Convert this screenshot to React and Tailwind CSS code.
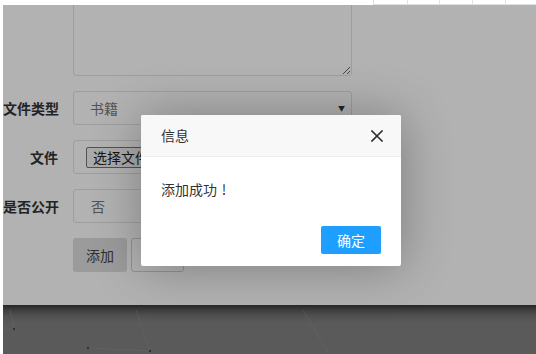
import React from "react";

const font = { fontFamily: '"Noto Sans CJK SC", "Noto Sans", sans-serif' };

function Label({ children }) {
  return (
    <div className="w-[55px] shrink-0 whitespace-nowrap text-right text-[14px] font-bold leading-[34px] text-[#333]">
      {children}
    </div>
  );
}

export default function App() {
  return (
    <div className="relative flex h-[354px] w-[536px] flex-col overflow-hidden bg-white" style={font}>
      {/* top strip with table cells */}
      <div className="flex h-[5px] shrink-0">
        <div className="w-[373px] shrink-0" />
        <div className="h-[5px] w-[34px] shrink-0 border-b border-l border-[#dfe3e3]" />
        <div className="h-[5px] w-[32px] shrink-0 border-b border-l border-[#dfe3e3]" />
        <div className="h-[5px] w-[33px] shrink-0 border-b border-l border-[#dfe3e3]" />
        <div className="h-[5px] w-[33px] shrink-0 border-b border-l border-[#dfe3e3]" />
        <div className="h-[5px] w-[33px] shrink-0 border-b border-l border-[#dfe3e3]" />
      </div>

      <div className="flex min-h-0 flex-1">
        <div className="w-[3px] shrink-0 bg-white" />
        <div className="flex min-w-0 flex-1 flex-col">
          {/* framed page with overlay */}
          <div className="relative h-[300px] shrink-0 overflow-hidden bg-white">
            <div className="mt-[-30px] flex flex-col gap-[15px]">
              <div className="flex">
                <div className="w-[55px] shrink-0" />
                <textarea
                  className="ml-[15px] h-[101px] w-[279px] rounded-[3px] border border-[#e2e2e2] bg-white"
                  defaultValue=""
                />
              </div>
              <div className="flex">
                <Label>文件类型</Label>
                <div className="ml-[15px] flex h-[34px] w-[279px] items-center justify-between rounded-[3px] border border-[#e2e2e2] bg-white pl-[16px] pr-[6px]">
                  <span className="text-[14px] text-[#777]">书籍</span>
                  <span className="text-[7px] leading-none text-[#333]">▼</span>
                </div>
              </div>
              <div className="flex">
                <Label>文件</Label>
                <div className="ml-[15px] flex h-[34px] w-[279px] items-center rounded-[3px] border border-[#e2e2e2] bg-white pl-[12px]">
                  <div className="flex h-[21px] items-center rounded-[2px] border border-[#767676] bg-[#f4f4f4] px-[6px] text-[14px] leading-none text-[#222]">
                    选择文件
                  </div>
                  <span className="ml-[6px] text-[14px] text-[#333]">未选择任何文件</span>
                </div>
              </div>
              <div className="flex">
                <Label>是否公开</Label>
                <div className="ml-[15px] flex h-[34px] w-[279px] items-center rounded-[3px] border border-[#e2e2e2] bg-white pl-[17px]">
                  <span className="text-[14px] text-[#777]">否</span>
                </div>
              </div>
              <div className="flex">
                <div className="w-[55px] shrink-0" />
                <div className="ml-[15px] flex gap-[4px]">
                  <div className="flex h-[34px] w-[54px] items-center justify-center rounded-[3px] bg-[#dedede] text-[14px] text-[#444]">
                    添加
                  </div>
                  <div className="flex h-[34px] w-[53px] items-center justify-center rounded-[3px] border border-[#d2d2d2] bg-white text-[14px] text-[#555]">
                    重置
                  </div>
                </div>
              </div>
            </div>
            <div className="absolute inset-0 bg-black/30" />
          </div>

          {/* dark area below */}
          <div className="relative flex-1 bg-[linear-gradient(to_bottom,#262626_0px,#3e3e3e_5px,#515151_11px,#5a5a5a_18px,#5a5a5a_100%)]">
            <svg className="absolute inset-0" width="533" height="49" viewBox="0 0 533 49">
              <g stroke="#6a6a6a" strokeWidth="0.6" fill="none" opacity="0.7">
                <polyline points="7,5 11,24 0,24" />
                <polyline points="85,43 147,46" />
                <line x1="133" y1="5" x2="147" y2="46" />
                <line x1="300" y1="5" x2="326" y2="49" />
              </g>
              <g fill="#303030">
                <rect x="10" y="23" width="2" height="2" />
                <rect x="84" y="42" width="2" height="2" />
                <rect x="146" y="45" width="2" height="2" />
              </g>
            </svg>
          </div>
        </div>
      </div>

      {/* dialog */}
      <div className="absolute left-[141px] top-[115px] w-[260px] rounded-[2px] bg-white shadow-[1px_1px_50px_rgba(0,0,0,0.3)]">
        <div className="flex h-[42px] items-center justify-between rounded-t-[2px] border-b border-[#eee] bg-[#f8f8f8] pl-[20px] pr-[18px]">
          <span className="text-[14px] text-[#333]">信息</span>
          <svg width="12" height="12" viewBox="0 0 12 12">
            <path d="M1 1 L11 11 M11 1 L1 11" stroke="#2e2e2e" strokeWidth="1.6" strokeLinecap="square" />
          </svg>
        </div>
        <div className="p-[20px] text-[14px] leading-[24px] text-[#333]">
          添加成功<span className="inline-block w-[14px] text-center">!</span>
        </div>
        <div className="flex justify-end px-[15px] pb-[12px]">
          <div className="mx-[5px] mt-[5px] flex h-[28px] w-[60px] items-center justify-center rounded-[2px] bg-[#1E9FFF] text-[14px] text-white">
            确定
          </div>
        </div>
      </div>
    </div>
  );
}
